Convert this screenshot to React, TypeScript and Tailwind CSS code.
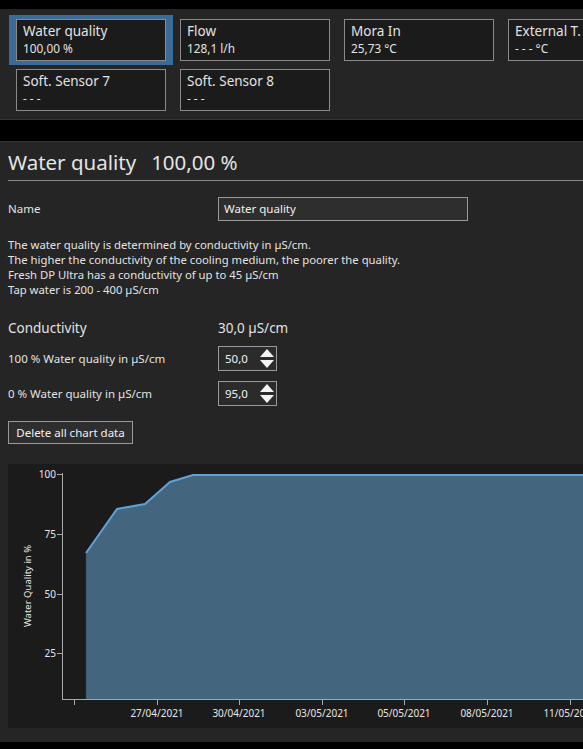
import React from 'react';

const FONT = { fontFamily: '"Noto Sans", "Open Sans", sans-serif' };

type Sensor = { name: string; value: string; selected?: boolean };

const sensors: Sensor[] = [
  { name: 'Water quality', value: '100,00 %', selected: true },
  { name: 'Flow', value: '128,1 l/h' },
  { name: 'Mora In', value: '25,73 °C' },
  { name: 'External T.', value: '- - - °C' },
  { name: 'Soft. Sensor 7', value: '- - -' },
  { name: 'Soft. Sensor 8', value: '- - -' },
];

function SensorTile({ sensor }: { sensor: Sensor }) {
  return (
    <div
      className={`w-[164px] h-[50px] px-[7px] pt-[4px] pb-[4px] ${
        sensor.selected ? 'bg-[#3b6c97]' : ''
      }`}
    >
      <div className="h-[42px] border border-[#8a8a8a] bg-[#1b1b1b] px-[6px] pt-[1px] text-[#e2e2e2] overflow-hidden whitespace-nowrap">
        <p className="text-[13.5px] leading-[20px]">{sensor.name}</p>
        <p className="text-[11.8px] leading-[15px]">{sensor.value}</p>
      </div>
    </div>
  );
}

function SpinBox({ value }: { value: string }) {
  return (
    <div className="w-[59px] h-[25px] border border-[#9a9a9a] bg-[#2b2b2b] flex items-center justify-between pl-[6px] pr-[1px]">
      <span className="text-[11.5px] text-[#f0f0f0]">{value}</span>
      <svg width="16" height="21" viewBox="0 0 16 21">
        <polygon points="8,1 15,9 1,9" fill="#f4f4f4" />
        <polygon points="1,12 15,12 8,20" fill="#f4f4f4" />
      </svg>
    </div>
  );
}

function Chart() {
  const xTicks = [
    { x: 66, label: '' },
    { x: 149, label: '27/04/2021' },
    { x: 231, label: '30/04/2021' },
    { x: 314, label: '03/05/2021' },
    { x: 396, label: '05/05/2021' },
    { x: 479, label: '08/05/2021' },
    { x: 562, label: '11/05/2021' },
  ];
  const yTicks = [
    { y: 10, label: '100' },
    { y: 70, label: '75' },
    { y: 130, label: '50' },
    { y: 189, label: '25' },
  ];
  const line = '78,89 109,45 137,40 162,18 185,11 600,11';
  return (
    <div className="mt-[20px] w-[600px] h-[264px] bg-[#1b1b1b]">
      <svg width="600" height="264" viewBox="0 0 600 264" style={FONT}>
        <polygon points={`78,235 ${line} 600,235`} fill="#44657e" />
        <line x1="78" y1="89" x2="78" y2="235" stroke="#2f4658" strokeDasharray="2 2" />
        <polyline points={line} fill="none" stroke="#5ea2d8" strokeWidth="2" />
        <line x1="54.5" y1="9" x2="54.5" y2="235" stroke="#a8a8a8" />
        <line x1="54" y1="235.5" x2="600" y2="235.5" stroke="#a8a8a8" />
        {yTicks.map((t) => (
          <g key={t.label}>
            <line x1="49" y1={t.y + 0.5} x2="54" y2={t.y + 0.5} stroke="#a8a8a8" />
            <text x="48" y={t.y + 4} fontSize="10" fill="#e6e6e6" textAnchor="end">
              {t.label}
            </text>
          </g>
        ))}
        {xTicks.map((t) => (
          <g key={t.x}>
            <line x1={t.x + 0.5} y1="235" x2={t.x + 0.5} y2="241" stroke="#a8a8a8" />
            {t.label && (
              <text x={t.x} y="253" fontSize="10" fill="#e6e6e6" textAnchor="middle">
                {t.label}
              </text>
            )}
          </g>
        ))}
        <text
          x="0"
          y="0"
          fontSize="9.5"
          fill="#e6e6e6"
          textAnchor="middle"
          transform="translate(23 122) rotate(-90)"
        >
          Water Quality in %
        </text>
      </svg>
    </div>
  );
}

export default function App() {
  return (
    <div className="w-[583px] h-[749px] bg-black overflow-hidden pt-[9px] text-[#e2e2e2]" style={FONT}>
      {/* Sensor tiles */}
      <div className="w-[600px] h-[111px] bg-[#252525] border-b border-[#343434] pl-[9px] pt-[6px]">
        <div className="grid grid-cols-[164px_164px_164px_164px]">
          {sensors.map((s) => (
            <SensorTile key={s.name} sensor={s} />
          ))}
        </div>
      </div>

      {/* Detail panel */}
      <div className="mt-[21px] w-[600px] h-[601px] bg-[#252525] border-t border-[#333] pl-[8px]">
        <div className="flex items-baseline gap-[15px] pt-[5px] h-[39px] text-[20.5px] text-[#e4e4e4] border-b border-[#8a8a8a]">
          <span>Water quality</span>
          <span>100,00 %</span>
        </div>

        <div className="flex items-center mt-[16px] h-[24px]">
          <span className="w-[210px] text-[11.5px]">Name</span>
          <div className="w-[250px] h-[24px] border border-[#9a9a9a] bg-[#2e2e2e] flex items-center pl-[5px] text-[11.5px] text-[#f0f0f0]">
            Water quality
          </div>
        </div>

        <div className="mt-[16px] text-[11.3px] leading-[15px]">
          <p>The water quality is determined by conductivity in µS/cm.</p>
          <p>The higher the conductivity of the cooling medium, the poorer the quality.</p>
          <p>Fresh DP Ultra has a conductivity of up to 45 µS/cm</p>
          <p>Tap water is 200 - 400 µS/cm</p>
        </div>

        <div className="flex items-center mt-[19px] h-[24px] text-[13.5px]">
          <span className="w-[210px]">Conductivity</span>
          <span>30,0 µS/cm</span>
        </div>

        <div className="flex items-center mt-[6px] text-[11.5px]">
          <span className="w-[210px]">100 % Water quality in µS/cm</span>
          <SpinBox value="50,0" />
        </div>

        <div className="flex items-center mt-[10px] text-[11.5px]">
          <span className="w-[210px]">0 % Water quality in µS/cm</span>
          <SpinBox value="95,0" />
        </div>

        <button className="block mt-[15px] h-[23px] w-[125px] border border-[#9a9a9a] bg-[#2e2e2e] text-[11.5px] text-[#f0f0f0]">
          Delete all chart data
        </button>

        <Chart />
      </div>
    </div>
  );
}
